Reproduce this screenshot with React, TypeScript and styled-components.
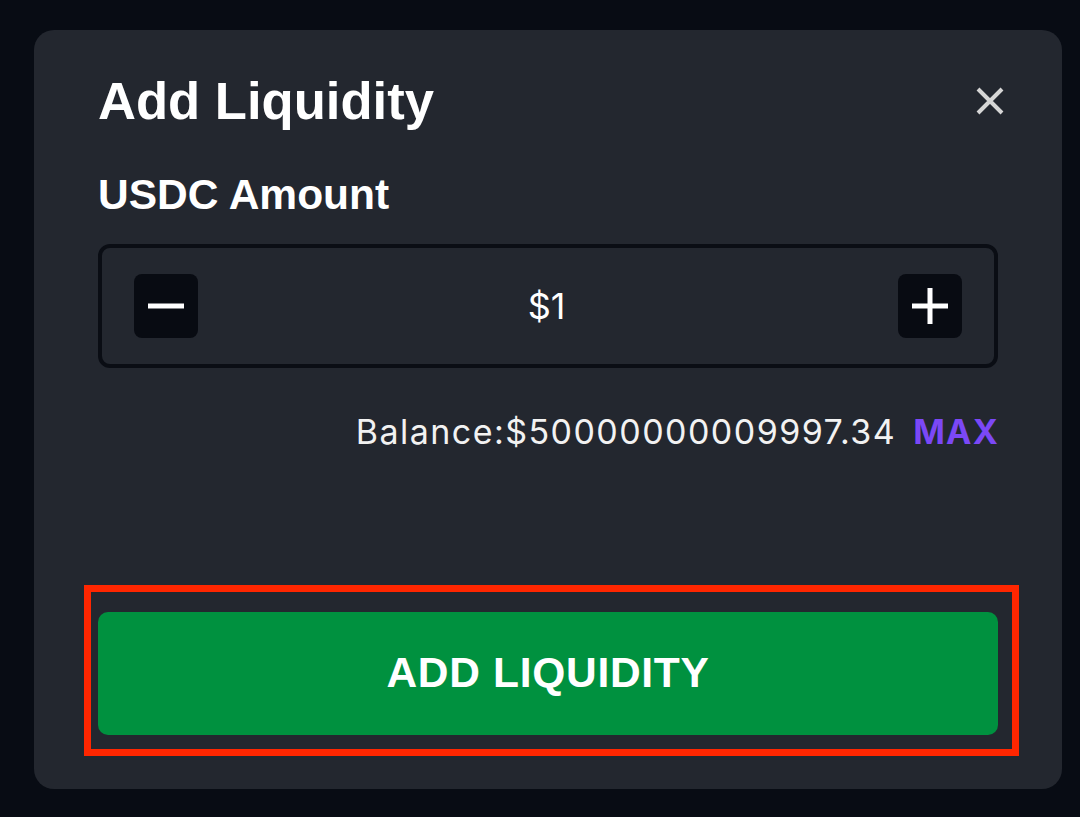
import React from "react";
import styled, { createGlobalStyle } from "styled-components";

const Global = createGlobalStyle`
  html, body {
    margin: 0;
    padding: 0;
    background: #080c14;
  }
  body {
    width: 1080px;
    height: 817px;
    overflow: hidden;
    font-family: Inter, "Liberation Sans", sans-serif;
  }
`;

const Page = styled.div`
  width: 1080px;
  height: 817px;
  padding: 30px 0 0 34px;
  box-sizing: border-box;
`;

const Modal = styled.div`
  width: 1028px;
  height: 759px;
  box-sizing: border-box;
  background: #23272f;
  border-radius: 20px;
  padding: 41px 64px 54px 64px;
  display: flex;
  flex-direction: column;
`;

const Header = styled.div`
  display: flex;
  align-items: center;
  justify-content: space-between;
`;

const Title = styled.h1`
  margin: 0;
  font-family: "Liberation Sans", Arial, sans-serif;
  font-weight: 700;
  font-size: 52.6px;
  line-height: 60px;
  color: #ffffff;
`;

const CloseButton = styled.button`
  width: 28px;
  height: 28px;
  padding: 0;
  margin-right: -6px;
  border: none;
  background: transparent;
  display: flex;
  align-items: center;
  justify-content: center;
  cursor: pointer;
`;

const Label = styled.div`
  margin-top: 39px;
  font-family: "Liberation Sans", Arial, sans-serif;
  font-weight: 700;
  font-size: 42.5px;
  line-height: 50px;
  color: #ffffff;
`;

const InputBox = styled.div`
  margin-top: 24px;
  height: 124px;
  box-sizing: border-box;
  border: 4px solid #0a0d14;
  border-radius: 12px;
  padding: 0 32px;
  display: flex;
  align-items: center;
  justify-content: space-between;
`;

const StepButton = styled.button`
  width: 64px;
  height: 64px;
  border: none;
  padding: 0;
  border-radius: 8px;
  background: #080b12;
  display: flex;
  align-items: center;
  justify-content: center;
  cursor: pointer;
`;

const Value = styled.div`
  font-family: Inter, sans-serif;
  font-size: 36px;
  font-weight: 400;
  color: #ffffff;
  margin-right: 3px;
`;

const BalanceRow = styled.div`
  margin-top: 44px;
  display: flex;
  justify-content: flex-end;
  align-items: center;
  gap: 17px;
  font-family: Inter, sans-serif;
  font-size: 34px;
  line-height: 40px;
  letter-spacing: 1.45px;
`;

const BalanceText = styled.span`
  color: #f2f2f2;
  font-weight: 400;
`;

const MaxLink = styled.span`
  color: #7b48f6;
  font-weight: 700;
  letter-spacing: 1.2px;
  margin-right: -1px;
  cursor: pointer;
`;

const ActionWrap = styled.div`
  margin-top: auto;
  position: relative;
`;

const ActionButton = styled.button`
  width: 100%;
  height: 123px;
  border: none;
  border-radius: 10px;
  background: #00913f;
  color: #ffffff;
  font-family: "Liberation Sans", Arial, sans-serif;
  font-weight: 700;
  font-size: 42.5px;
  letter-spacing: 0.7px;
  padding: 0 0 2px 0;
  cursor: pointer;
`;

const Highlight = styled.div`
  position: absolute;
  top: -27px;
  left: -14px;
  right: -21px;
  bottom: -21px;
  border: 7px solid #ff2600;
  pointer-events: none;
`;

const CloseIcon = () => (
  <svg width="28" height="28" viewBox="0 0 28 28">
    <path d="M2 2 L26 26 M26 2 L2 26" stroke="#d6d6d6" strokeWidth="4" strokeLinecap="butt" />
  </svg>
);

const MinusIcon = () => (
  <svg width="36" height="36" viewBox="0 0 36 36">
    <rect x="0" y="15.5" width="36" height="5" fill="#ffffff" />
  </svg>
);

const PlusIcon = () => (
  <svg width="36" height="36" viewBox="0 0 36 36">
    <rect x="0" y="15.5" width="36" height="5" fill="#ffffff" />
    <rect x="15.5" y="0" width="5" height="36" fill="#ffffff" />
  </svg>
);

export default function App() {
  return (
    <>
      <Global />
      <Page>
        <Modal>
          <Header>
            <Title>Add Liquidity</Title>
            <CloseButton aria-label="Close">
              <CloseIcon />
            </CloseButton>
          </Header>
          <Label>USDC Amount</Label>
          <InputBox>
            <StepButton aria-label="Decrease">
              <MinusIcon />
            </StepButton>
            <Value>$1</Value>
            <StepButton aria-label="Increase">
              <PlusIcon />
            </StepButton>
          </InputBox>
          <BalanceRow>
            <BalanceText>Balance:$50000000009997.34</BalanceText>
            <MaxLink>MAX</MaxLink>
          </BalanceRow>
          <ActionWrap>
            <ActionButton>ADD LIQUIDITY</ActionButton>
            <Highlight />
          </ActionWrap>
        </Modal>
      </Page>
    </>
  );
}
